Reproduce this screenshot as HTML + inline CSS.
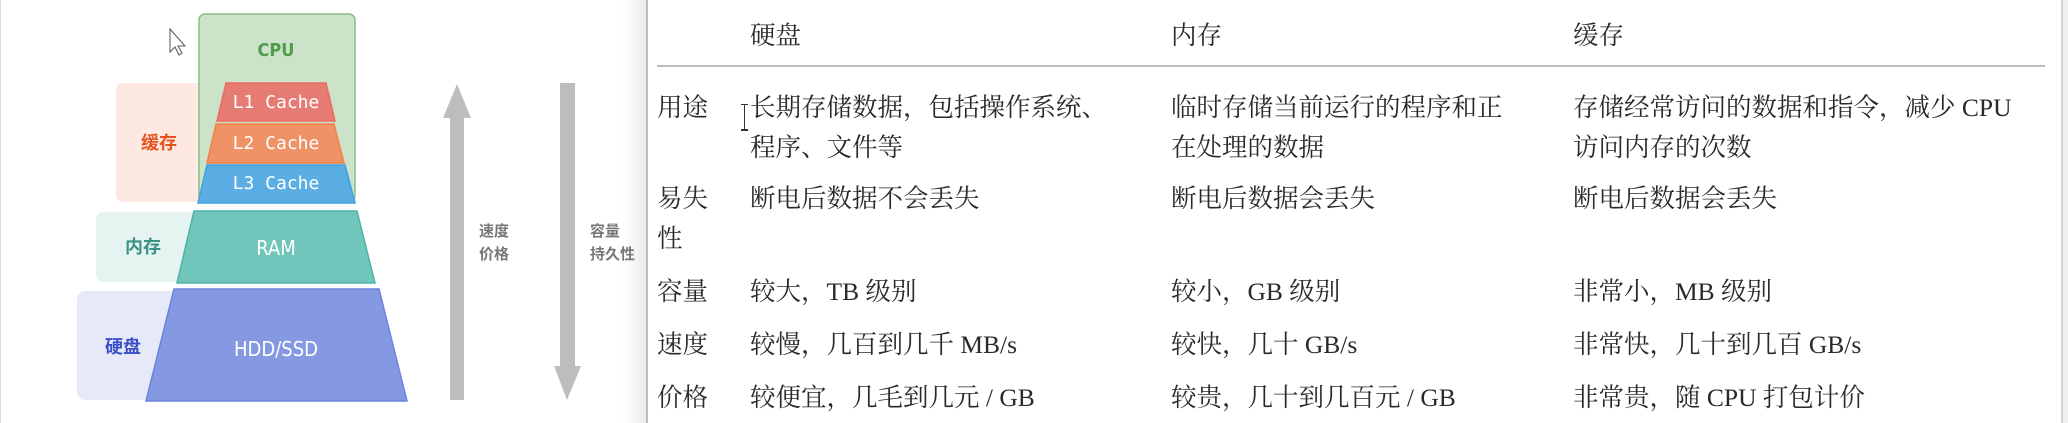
<!DOCTYPE html>
<html><head><meta charset="utf-8"><style>
html,body{margin:0;padding:0;background:#fff;width:2068px;height:423px;overflow:hidden;position:relative}
.t{position:absolute;font-family:"Liberation Serif","Noto Serif CJK SC",serif;font-size:25.5px;color:#2a2a2a;white-space:nowrap;line-height:40px}
</style></head><body>
<div style="position:absolute;left:0;top:0;width:1px;height:423px;background:#ddd"></div>
<div style="position:absolute;left:622px;top:0;width:24px;height:423px;background:linear-gradient(to right,#fff,#ececec)"></div>
<div style="position:absolute;left:646px;top:0;width:2px;height:423px;background:#bdbdbd"></div>
<div style="position:absolute;left:2061px;top:0;width:2px;height:423px;background:#d6d6d6"></div>
<div style="position:absolute;left:2063px;top:0;width:5px;height:423px;background:#f0f0f0"></div>

<svg width="646" height="423" style="position:absolute;left:0;top:0" xmlns="http://www.w3.org/2000/svg">
<rect x="116" y="83" width="238" height="119" rx="7" fill="#fde9e2"/>
<rect x="96" y="212" width="200" height="70" rx="7" fill="#e5f3f1"/>
<rect x="77" y="291" width="260" height="109" rx="8" fill="#e6eaf8"/>
<rect x="199" y="14" width="156" height="188" rx="6" fill="#c9e2c7" fill-opacity="0.95" stroke="#86bf84" stroke-width="1.5"/>
<polygon points="226,83 326,83 335,121 217,121" fill="#e57b73" stroke="#ec6a62" stroke-width="1.5"/>
<polygon points="216,124 334,124 344,163 207,163" fill="#ef9266" stroke="#f47f4a" stroke-width="1.5"/>
<polygon points="207,165 345,165 355,203 198,203" fill="#5aaee3" stroke="#3ea0e2" stroke-width="1.5"/>
<polygon points="194,211 357,211 375,283 177,283" fill="#70c6bb" stroke="#4fb3a5" stroke-width="1.5"/>
<polygon points="174,289 379,289 407,401 146,401" fill="#8599e2" stroke="#6c82dd" stroke-width="1.5"/>
<g font-family="DejaVu Sans Mono,monospace" font-size="18" fill="#fff" text-anchor="middle">
<text x="276" y="108">L1 Cache</text>
<text x="276" y="149">L2 Cache</text>
<text x="276" y="189">L3 Cache</text>
</g>
<g font-family="DejaVu Sans Condensed,DejaVu Sans,sans-serif" font-size="20" fill="#fff" text-anchor="middle">
<text x="276" y="255">RAM</text>
<text x="276" y="356">HDD/SSD</text>
</g>
<text x="276" y="56" font-family="DejaVu Sans Condensed,sans-serif" font-weight="bold" font-size="18" fill="#4f9c4c" text-anchor="middle">CPU</text>
<g font-family="Noto Sans CJK SC,sans-serif" font-weight="bold" font-size="18">
<text x="141" y="149" fill="#e8531f">缓存</text>
<text x="125" y="253" fill="#3a9384">内存</text>
<text x="105" y="353" fill="#3a4fc7">硬盘</text>
</g>
<rect x="450" y="116" width="14" height="284" fill="#bdbdbd"/>
<polygon points="457,84 471,118 443,118" fill="#bdbdbd"/>
<rect x="560" y="83" width="15" height="284" fill="#bdbdbd"/>
<polygon points="554,366 581,366 567,400" fill="#bdbdbd"/>
<g font-family="Noto Sans CJK SC,sans-serif" font-weight="bold" font-size="15" fill="#777">
<text x="479" y="236">速度</text><text x="479" y="259">价格</text>
<text x="590" y="236">容量</text><text x="590" y="259">持久性</text>
</g>
<path d="M170,29 L170,52 L175,47 L179,55 L182,53 L178,46 L185,46 Z" fill="#fff" stroke="#555" stroke-width="1"/>
</svg>

<div style="position:absolute;left:657px;top:65px;width:1388px;height:2px;background:#bcbcbc"></div>
<div style="position:absolute;left:744px;top:104px;width:1px;height:26px;background:#333"></div>
<div style="position:absolute;left:741px;top:104px;width:7px;height:1px;background:#333"></div>
<div style="position:absolute;left:741px;top:129px;width:7px;height:2px;background:#333"></div>

<div class="t" style="left:750px;top:16px">硬盘</div>
<div class="t" style="left:1171px;top:16px">内存</div>
<div class="t" style="left:1573px;top:16px">缓存</div>

<div class="t" style="left:657px;top:88px">用途</div>
<div class="t" style="left:750px;top:88px">长期存储数据，包括操作系统、<br>程序、文件等</div>
<div class="t" style="left:1171px;top:88px">临时存储当前运行的程序和正<br>在处理的数据</div>
<div class="t" style="left:1573px;top:88px">存储经常访问的数据和指令，减少 CPU<br>访问内存的次数</div>

<div class="t" style="left:657px;top:179px">易失<br>性</div>
<div class="t" style="left:750px;top:179px">断电后数据不会丢失</div>
<div class="t" style="left:1171px;top:179px">断电后数据会丢失</div>
<div class="t" style="left:1573px;top:179px">断电后数据会丢失</div>

<div class="t" style="left:657px;top:272px">容量</div>
<div class="t" style="left:750px;top:272px">较大，TB 级别</div>
<div class="t" style="left:1171px;top:272px">较小，GB 级别</div>
<div class="t" style="left:1573px;top:272px">非常小，MB 级别</div>

<div class="t" style="left:657px;top:325px">速度</div>
<div class="t" style="left:750px;top:325px">较慢，几百到几千 MB/s</div>
<div class="t" style="left:1171px;top:325px">较快，几十 GB/s</div>
<div class="t" style="left:1573px;top:325px">非常快，几十到几百 GB/s</div>

<div class="t" style="left:657px;top:378px">价格</div>
<div class="t" style="left:750px;top:378px">较便宜，几毛到几元 / GB</div>
<div class="t" style="left:1171px;top:378px">较贵，几十到几百元 / GB</div>
<div class="t" style="left:1573px;top:378px">非常贵，随 CPU 打包计价</div>
</body></html>
